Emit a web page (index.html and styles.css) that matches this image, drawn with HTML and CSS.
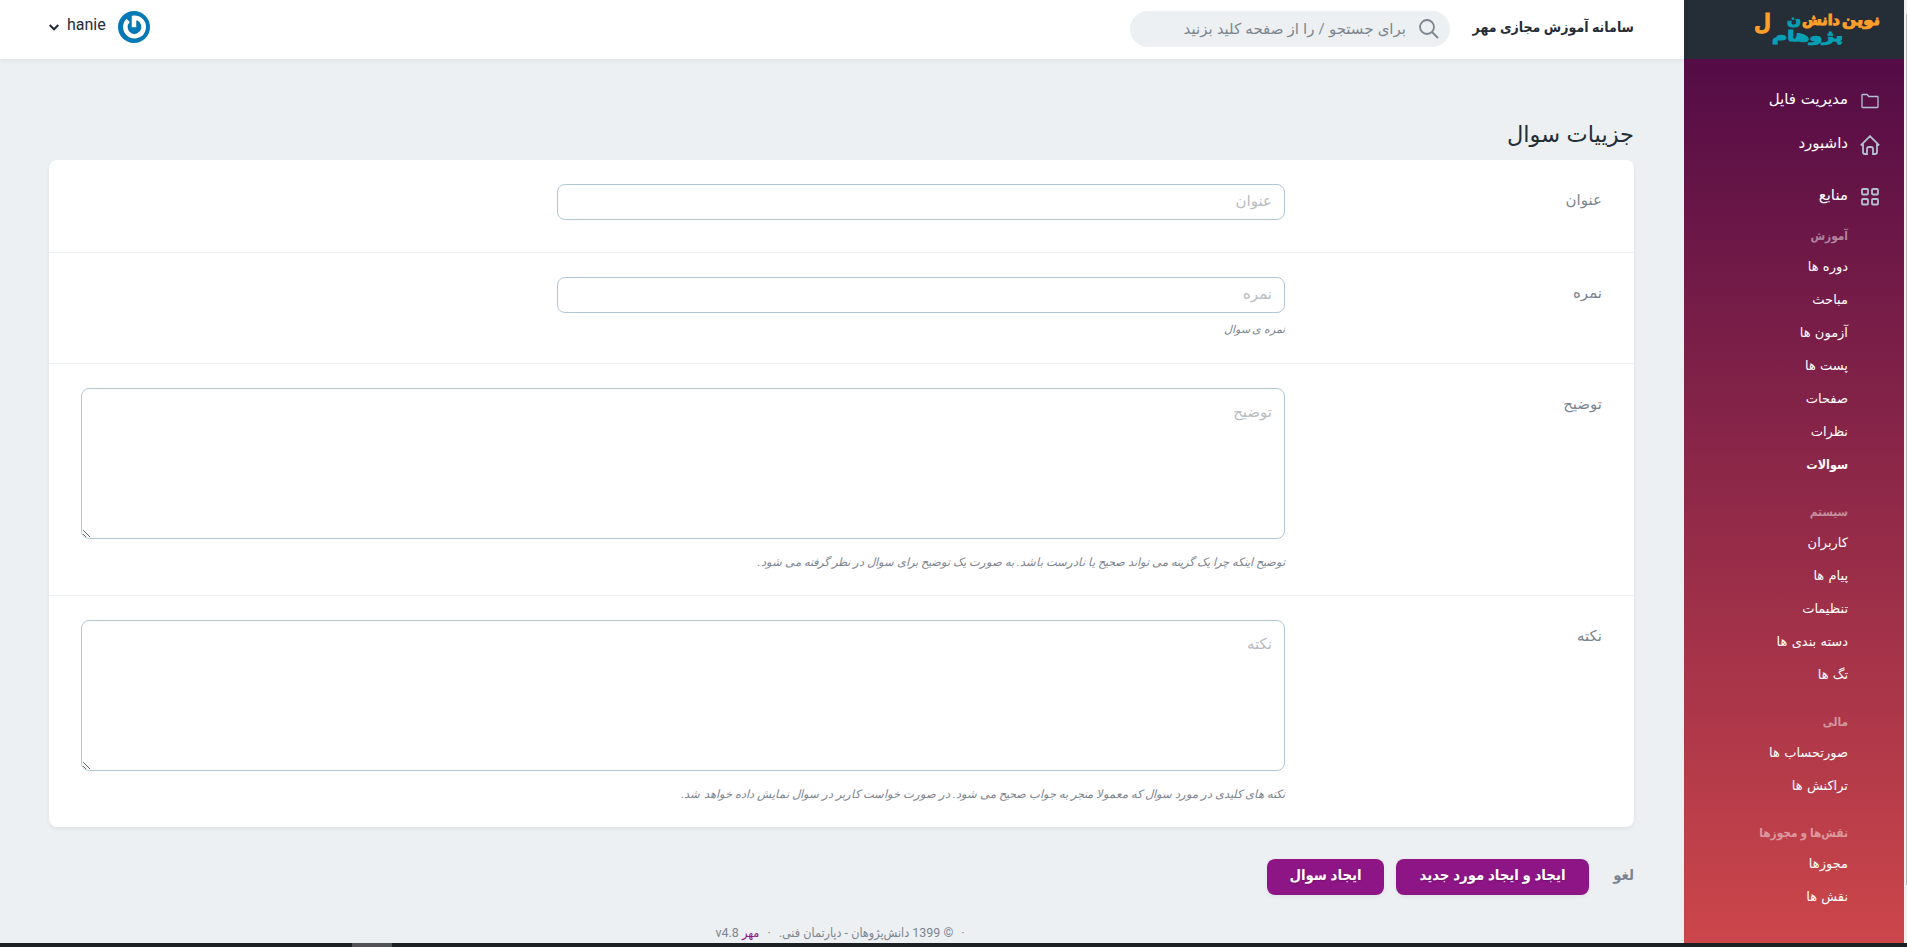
FILE: index.html
```html
<!DOCTYPE html>
<html lang="fa" dir="rtl">
<head>
<meta charset="utf-8">
<title>جزییات سوال</title>
<link rel="stylesheet" href="styles.css">
</head>
<body>
<div class="app">
  <div class="scroll-track"><div class="scroll-thumb"></div></div>
  <aside class="sidebar">
    <div class="brand">
      <svg class="logo" viewBox="0 0 126 34" width="126" height="34" direction="rtl">
        <text class="logo-orange" x="126" y="12" textLength="38" lengthAdjust="spacingAndGlyphs">نوین</text>
        <text class="logo-orange" x="86" y="12" textLength="38" lengthAdjust="spacingAndGlyphs">دانش</text>
        <text class="logo-teal" x="47" y="12" textLength="14" lengthAdjust="spacingAndGlyphs">ن</text>
        <text class="logo-teal" x="89" y="28" textLength="71" lengthAdjust="spacingAndGlyphs">پژوهام</text>
        <text class="logo-orange logo-tail" x="17" y="17" textLength="17" lengthAdjust="spacingAndGlyphs">ل</text>
      </svg>
    </div>
    <nav class="nav">
      <a class="main-link files"><svg class="ico" viewBox="0 0 20 20" width="20" height="20"><path d="M2 4.200q0-.7.7-.7H7l1.800 2h8.500q.7 0 .7.7v9.600q0 .7-.7.7H2.700q-.7 0-.7-.7z"/></svg><span>مدیریت فایل</span></a>
      <a class="main-link dash"><svg class="ico" viewBox="0 0 20 20" width="20" height="20"><path d="M.8 10.400 10 1.200l9.200 9.200M3 9v8q0 2 2 2h2v-5q0-2 2-2h2q2 0 2 2v5h2q2 0 2-2V9"/></svg><span>داشبورد</span></a>
      <a class="main-link res"><svg class="ico" viewBox="0 0 20 20" width="20" height="20"><rect x="2" y="2" width="6" height="5.500" rx="1"/><rect x="12" y="2" width="6" height="5.500" rx="1"/><rect x="2" y="12" width="6" height="5.500" rx="1"/><rect x="12" y="12" width="6" height="5.500" rx="1"/></svg><span>منابع</span></a>
      <h4>آموزش</h4>
      <ul><li>دوره ها</li><li>مباحث</li><li>آزمون ها</li><li>پست ها</li><li>صفحات</li><li>نظرات</li><li class="active">سوالات</li></ul>
      <h4>سیستم</h4>
      <ul><li>کاربران</li><li>پیام ها</li><li>تنظیمات</li><li>دسته بندی ها</li><li>تگ ها</li></ul>
      <h4>مالی</h4>
      <ul><li>صورتحساب ها</li><li>تراکنش ها</li></ul>
      <h4>نقش‌ها و مجوزها</h4>
      <ul><li>مجوزها</li><li>نقش ها</li></ul>
    </nav>
  </aside>
  <div class="content">
    <header class="topbar">
      <a class="site">سامانه آموزش مجازی مهر</a>
      <div class="search">
        <svg viewBox="0 0 20 20" width="20" height="20"><circle cx="8" cy="8" r="7"/><path d="m13 13 6 6"/></svg>
        <span>برای جستجو / را از صفحه کلید بزنید</span>
      </div>
      <div class="user">
        <svg class="avatar" viewBox="0 0 32 32" width="32" height="32"><circle cx="16" cy="16" r="16" fill="#0479b8"/><path class="shade" d="M10.200 9.300a9.200 9.200 0 1 0 5.800-2.500v9.400"/><path class="mark" d="M10.200 9.300a9.200 9.200 0 1 0 5.800-2.500v9.400"/></svg>
        <span>hanie</span>
        <svg class="caret" viewBox="0 0 10 7" width="10" height="7"><path d="m.7 1 4.300 4.300L9.300 1"/></svg>
      </div>
    </header>
    <main>
      <h1>جزییات سوال</h1>
      <form class="card">
        <div class="row r1"><label>عنوان</label><div class="field"><input placeholder="عنوان"></div></div>
        <div class="row r2"><label>نمره</label><div class="field"><input placeholder="نمره"><p class="help">نمره ی سوال</p></div></div>
        <div class="row r3"><label>توضیح</label><div class="field"><textarea placeholder="توضیح"></textarea><p class="help">توضیح اینکه چرا یک گزینه می تواند صحیح یا نادرست باشد. به صورت یک توضیح برای سوال در نظر گرفته می شود.</p></div></div>
        <div class="row r4"><label>نکته</label><div class="field"><textarea placeholder="نکته"></textarea><p class="help">نکته های کلیدی در مورد سوال که معمولا منجر به جواب صحیح می شود. در صورت خواست کاربر در سوال نمایش داده خواهد شد.</p></div></div>
      </form>
      <div class="actions">
        <a class="cancel">لغو</a>
        <button class="wide" type="button">ایجاد و ایجاد مورد جدید</button>
        <button type="button">ایجاد سوال</button>
      </div>
      <footer><span>·</span><span>© 1399 دانش‌پژوهان - دپارتمان فنی.</span><span>·</span><span><b>مهر</b> <bdi>v4.8</bdi></span></footer>
    </main>
  </div>
</div>
<div class="bottom-strip"><div class="handle"></div></div>
</body>
</html>
```

FILE: styles.css
```css
* { box-sizing: border-box; }
body {
  margin: 0;
  height: 947px;
  overflow: hidden;
  background: #ecf0f3;
  color: #252d37;
  font-family: Roboto, "DejaVu Sans", sans-serif;
  font-size: 15px;
}
.app { display: flex; height: 943px; overflow: hidden; }
.bottom-strip { height: 4px; background: #1b2024; direction: ltr; padding-left: 352px; }
.handle { width: 40px; height: 4px; background: #515257; }
.scroll-track { width: 3px; flex: none; background: #f1f1f1; padding: 14px 0 58px; display: flex; }
.scroll-thumb { width: 1px; background: #b8b8b8; }
.sidebar {
  width: 220px;
  flex: none;
  color: #fff;
  background: linear-gradient(180deg, #4c0846, #cc464a);
}
.brand { height: 59px; background: #252d37; padding: 13px 24px 0 0; }
.logo { display: block; overflow: visible; }
.logo text { font: bold 14.5px "DejaVu Sans", sans-serif; stroke-width: 1; }
.logo .logo-tail { font-size: 22px; }
.logo-orange { fill: #fe9f2a; stroke: #fe9f2a; }
.logo-teal { fill: #05a0b5; stroke: #05a0b5; }
.main-link { display: flex; align-items: center; gap: 12px; height: 30px; padding-right: 24px; font-size: 15px; word-spacing: 1px; }
.main-link span { position: relative; top: -2px; }
.files { margin-top: 27px; }
.dash { margin-top: 14px; }
.res { margin-top: 22px; }
.ico { fill: none; stroke: #b3c1d1; stroke-width: 1.8; flex: none; }
.files .ico { stroke-width: 1.3; }
.nav h4 { margin: 0; height: 26px; line-height: 26px; padding-right: 56px; font-family: Roboto, "DejaVu Sans Condensed", "DejaVu Sans", sans-serif; font-size: 11.8px; font-weight: 700; color: rgba(255,255,255,.48); }
.res + h4 { margin-top: 11px; }
.nav ul + h4 { margin-top: 18px; }
.nav ul { list-style: none; margin: 0; padding: 1px 56px 0 0; }
.nav li { height: 33px; line-height: 33px; font-size: 13px; word-spacing: 1px; }
.nav .active { font-family: Roboto, "DejaVu Sans Condensed", "DejaVu Sans", sans-serif; font-weight: 700; font-size: 12.5px; }
.content { flex: 1; min-width: 0; }
.topbar {
  height: 59px;
  background: #fff;
  box-shadow: 0 2px 4px rgba(0,0,0,.05);
  display: flex;
  padding: 11px 50px 0 49px;
}
.site { width: 160px; margin-left: 24px; line-height: 32px; font-family: Roboto, "DejaVu Sans Condensed", "DejaVu Sans", sans-serif; font-size: 14px; font-weight: 700; white-space: nowrap; }
.search { width: 320px; height: 36px; border-radius: 18px; background: #ecf0f3; display: flex; align-items: center; gap: 13px; padding-right: 11px; color: #7c858e; word-spacing: .4px; }
.search span { margin-top: -1px; }
.search svg { fill: none; stroke: #7c858e; stroke-width: 1.8; }
.user { margin-right: auto; display: flex; align-items: center; height: 32px; font-size: 16px; }
.user span { margin: -5px 12px 0 8px; }
.avatar .mark { fill: none; stroke: #fff; stroke-width: 4.600; }
.avatar .shade { fill: none; stroke: #055a8a; stroke-width: 5.600; opacity: .5; }
.caret { fill: none; stroke: #252d37; stroke-width: 2; }
main { padding: 58px 50px 0 49px; }
h1 { margin: 0; height: 43px; line-height: 34px; font-size: 22.5px; font-weight: 400; word-spacing: 1px; }
.card { height: 667px; border-radius: 8px; background: #fff; box-shadow: 0 2px 4px rgba(0,0,0,.06); margin: 0; }
.row { display: flex; padding: 24px 32px 0; border-bottom: 1px solid #eef1f4; }
.r1 { height: 93px; }
.r2 { height: 111px; }
.r3 { height: 232px; }
.r4 { height: 231px; border: 0; }
.row label { width: 317px; line-height: 32px; color: #7c858e; }
.field { width: 1204px; display: flex; flex-direction: column; }
input, textarea {
  font: inherit;
  border: 1px solid #b2c8d4;
  border-radius: 8px;
  background: #fff;
  padding: 0 12px 2px;
  display: block;
  outline: none;
}
input { width: 728px; height: 36px; }
textarea { width: 1204px; height: 151px; padding-top: 11px; line-height: 24px; resize: both; }
::placeholder { color: #b8bcc1; opacity: 1; }
.help { margin: 8px 0 0; font-size: 11.5px; line-height: 18px; font-style: italic; word-spacing: .2px; color: #7c858e; white-space: nowrap; }
.r2 .help { font-size: 11px; word-spacing: 0; }
textarea + .help { margin-top: 14px; }
.actions { display: flex; align-items: center; margin-top: 32px; height: 36px; font-family: Roboto, "DejaVu Sans Condensed", "DejaVu Sans", sans-serif; font-size: 14.800px; }
.cancel { width: 33px; margin-left: 12px; color: #7c858e; font-weight: 700; margin-top: -4px; }
button { font: inherit; font-weight: 700; color: #fff; background: #8e1586; border: 0; border-radius: 8px; height: 36px; width: 117px; padding: 0 0 4px; margin-left: 12px; box-shadow: 0 2px 4px rgba(0,0,0,.05); text-shadow: 0 1px 2px rgba(0,0,0,.2); white-space: nowrap; }
.wide { width: 193px; }
footer { display: flex; justify-content: center; gap: 8px; padding-left: 0; padding-right: 3px; margin-top: 28px; line-height: 20px; font-family: Roboto, "DejaVu Sans Condensed", "DejaVu Sans", sans-serif; font-size: 12.5px; color: #7c858e; white-space: nowrap; }
footer b { font-weight: 400; color: #8e1586; }
```
